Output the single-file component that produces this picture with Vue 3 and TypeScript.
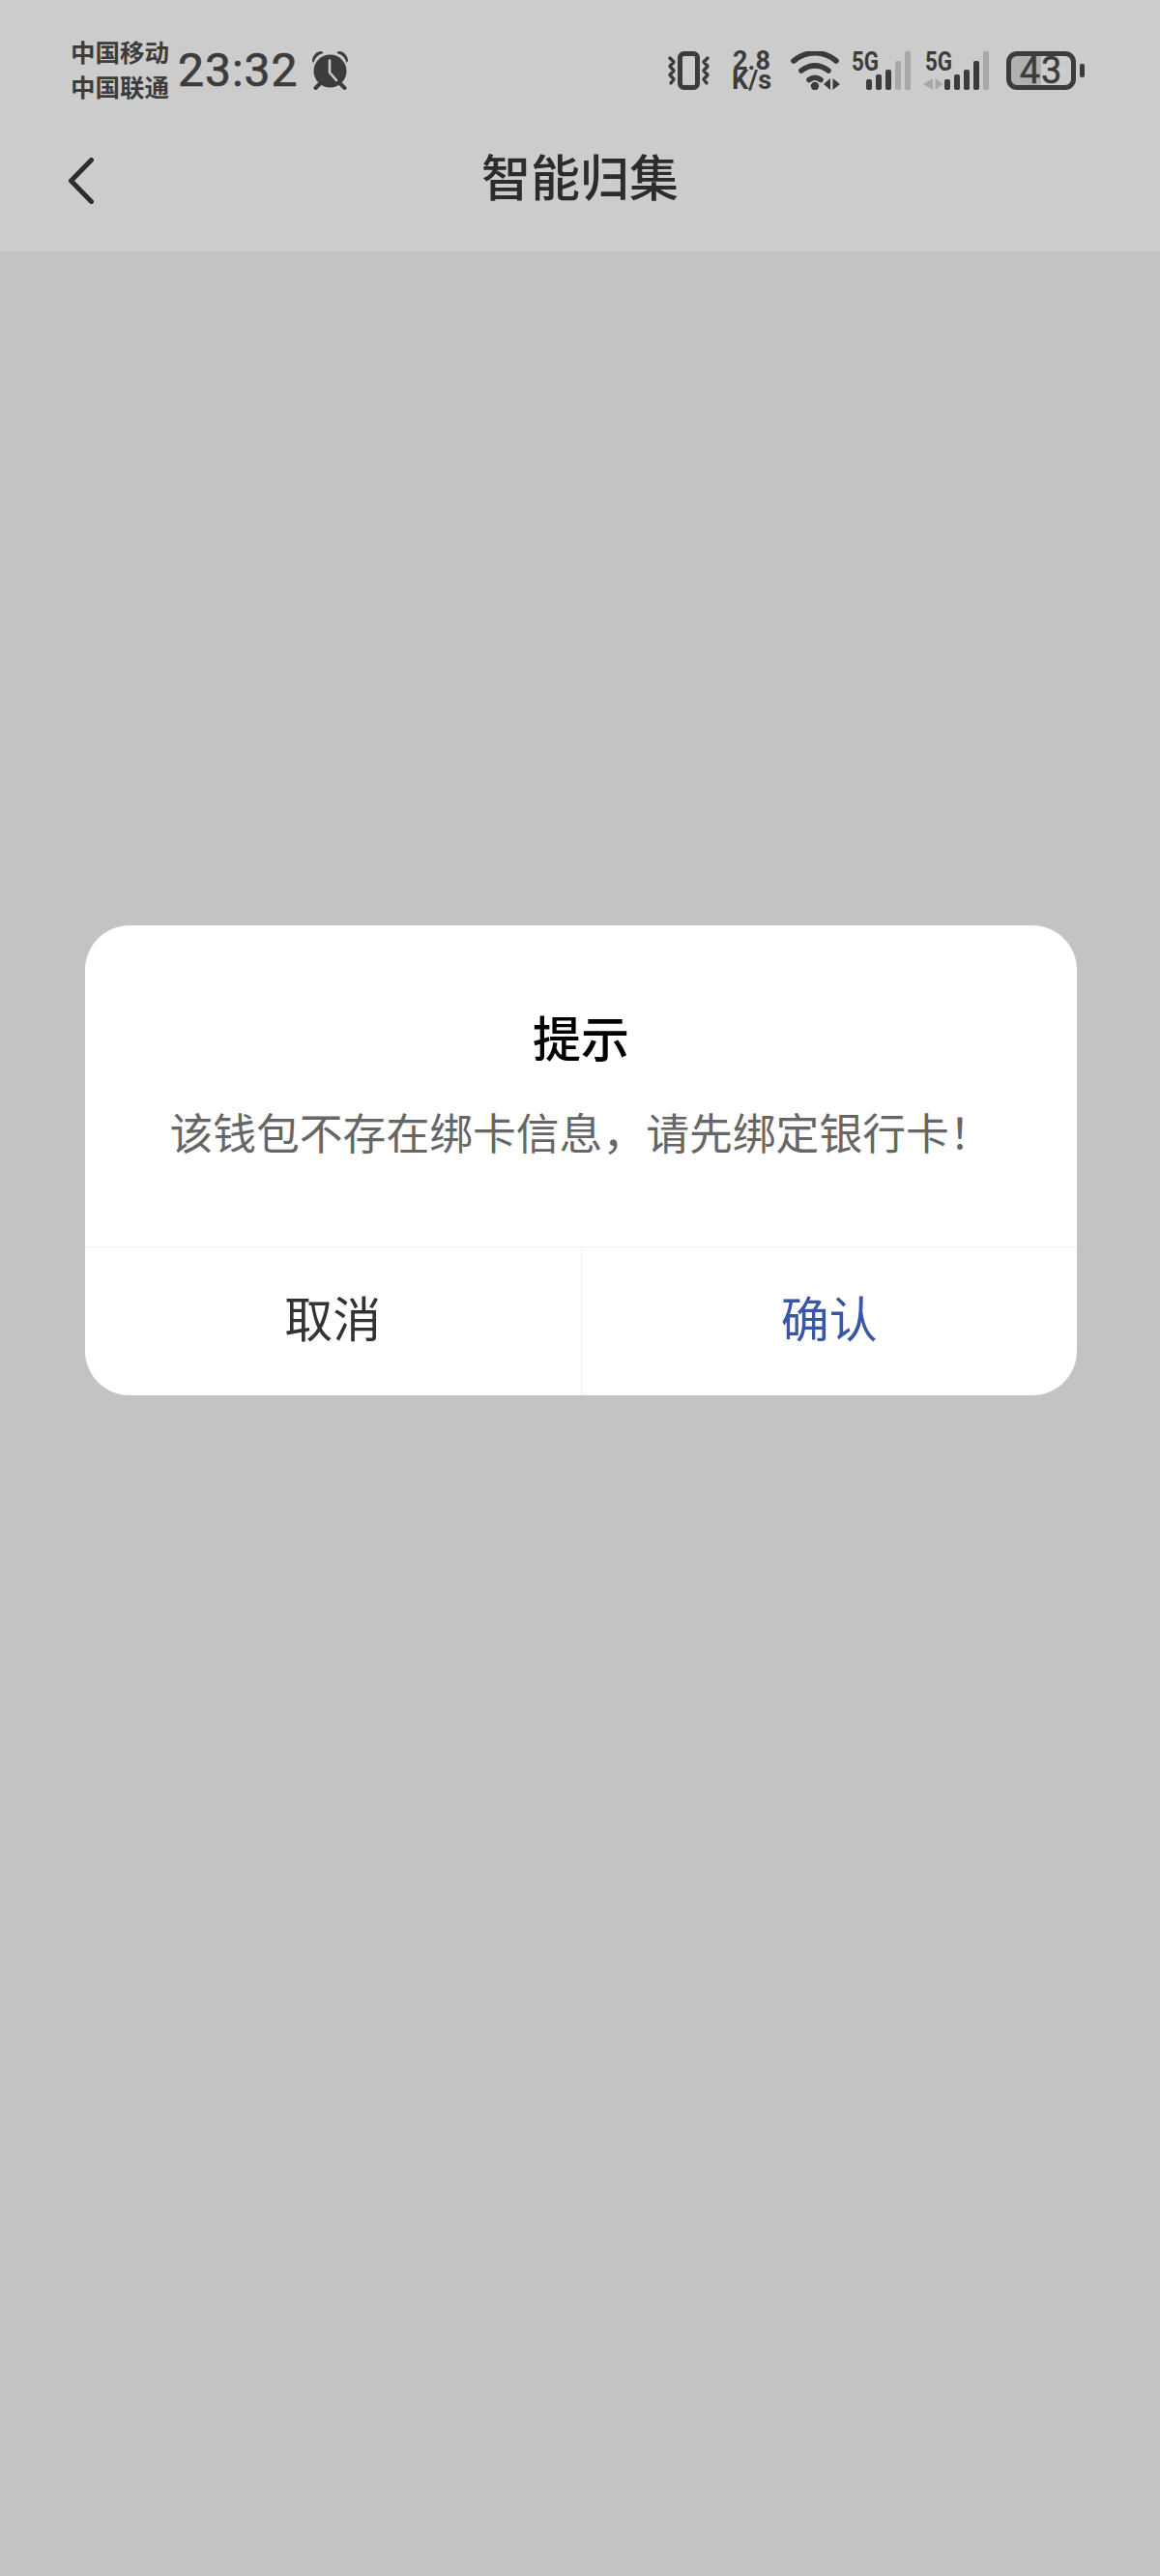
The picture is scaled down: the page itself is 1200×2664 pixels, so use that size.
<script setup lang="ts">
const carriers = ['中国移动', '中国联通']
</script>

<template>
  <div class="page">
    <div class="topbar">
      <div class="statusbar">
        <div class="carriers">
          <div v-for="c in carriers" :key="c">{{ c }}</div>
        </div>
        <div class="time">23:32</div>
        <svg class="alarm" width="40" height="40" viewBox="0 0 40 40">
          <circle cx="19.500" cy="20.500" r="17" fill="#3c3c3c" />
          <path d="M19 9.500V22l7 8" fill="none" stroke="#ccc" stroke-width="2.600" stroke-linecap="round" stroke-linejoin="round" />
          <path d="M1 10C1 5 5 0 11 0l1.500 2C8 3 4 6 2.500 12zM38 10C38 5 34 0 28 0l-1.500 2c4.500 1 8.500 4 10 10z" fill="#3c3c3c" />
          <path d="M4.500 38l5-5M34.500 38l-5-5" stroke="#3c3c3c" stroke-width="4" stroke-linecap="round" />
        </svg>

        <div class="spacer"></div>

        <svg class="vibrate" width="45" height="40" viewBox="0 0 45 40">
          <rect x="13.500" y="2.500" width="18" height="35" rx="4" fill="none" stroke="#3c3c3c" stroke-width="5" />
          <path d="M3 7l4 4-4 4.500 4 4.500-4 4.500 4 4.500-3 4M42 7l-4 4 4 4.500-4 4.500 4 4.500-4 4.500 3 4" fill="none" stroke="#3c3c3c" stroke-width="3.400" stroke-linecap="round" stroke-linejoin="round" />
        </svg>

        <div class="speed">
          <div>2.8</div>
          <div>K/s</div>
        </div>

        <svg class="wifi" width="52" height="40" viewBox="0 0 52 40">
          <path d="M4 10C17-1 35-1 48 10M12 20c9-6.500 19-6.500 28 0M20 29.500c4-3 8-3 12 0" fill="none" stroke="#3c3c3c" stroke-width="5.600" stroke-linecap="round" />
          <circle cx="26" cy="36" r="4.200" fill="#3c3c3c" />
          <path d="M42 28v12l-7-6zM44.500 28v12l7.500-6z" fill="#3c3c3c" />
        </svg>

        <svg class="signal" width="62" height="40" viewBox="0 0 62 40">
          <text x="0" y="19.500" class="net" textLength="28" lengthAdjust="spacingAndGlyphs">5G</text>
          <rect x="15" y="29" width="6" height="11" rx="2" fill="#3c3c3c" />
          <rect x="25" y="24" width="6" height="16" rx="2" fill="#3c3c3c" />
          <rect x="35" y="19" width="6" height="21" rx="2" fill="#3c3c3c" />
          <rect x="45" y="10" width="6" height="30" rx="2" fill="#a8a8a8" />
          <rect x="55" y="0" width="6" height="40" rx="2" fill="#a8a8a8" />
        </svg>

        <svg class="signal second" width="68" height="40" viewBox="0 0 68 40">
          <text x="2" y="19.500" class="net" textLength="28" lengthAdjust="spacingAndGlyphs">5G</text>
          <path d="M10 28v12l-10-6zM12.500 28v12l8-6z" fill="#a8a8a8" />
          <rect x="22" y="29" width="6" height="11" rx="2" fill="#3c3c3c" />
          <rect x="32" y="24" width="6" height="16" rx="2" fill="#3c3c3c" />
          <rect x="42" y="19" width="6" height="21" rx="2" fill="#3c3c3c" />
          <rect x="52" y="10" width="6" height="30" rx="2" fill="#3c3c3c" />
          <rect x="62" y="0" width="6" height="40" rx="2" fill="#a8a8a8" />
        </svg>

        <div class="battery">
          <div class="battery-body">43</div>
          <div class="battery-nub"></div>
        </div>
      </div>

      <div class="navbar">
        <svg class="back" width="26" height="48" viewBox="0 0 26 48">
          <path d="M23.500 2.500L2.500 24l21 21.500" fill="none" stroke="#2c2c2c" stroke-width="5" stroke-linecap="round" stroke-linejoin="round" />
        </svg>
        <div class="title">智能归集</div>
      </div>
    </div>

    <div class="content">
      <div class="dialog">
        <div class="dialog-body">
          <div class="dialog-title">提示</div>
          <div class="dialog-text">该钱包不存在绑卡信息，请先绑定银行卡！</div>
        </div>
        <div class="dialog-actions">
          <div class="action cancel">取消</div>
          <div class="action confirm">确认</div>
        </div>
      </div>
    </div>
  </div>
</template>

<style>
html,
body {
  margin: 0;
  background: #c3c3c3;
}
</style>

<style scoped>
.page {
  width: 1200px;
  height: 2664px;
  background: #c3c3c3;
  font-family: Roboto, "Noto Sans CJK SC", sans-serif;
  overflow: hidden;
}

.topbar {
  height: 260px;
  background: #cccccc;
}

.statusbar {
  height: 110px;
  padding: 36px 78px 0 73px;
  display: flex;
  align-items: center;
  color: #3c3c3c;
  box-sizing: border-box;
}

.carriers {
  width: 102px;
  font-size: 25.500px;
  line-height: 36px;
  font-weight: 700;
  white-space: nowrap;
}

.time {
  margin-left: 9px;
  font-size: 48px;
  line-height: 56px;
  letter-spacing: 1px;
  -webkit-text-stroke: 0.7px #3c3c3c;
  white-space: nowrap;
}

.alarm {
  margin-left: 13px;
}

.spacer {
  flex: 1;
}

.speed {
  margin-left: 20px;
  width: 45px;
  font-size: 27px;
  line-height: 20px;
  font-weight: 700;
  text-align: center;
}

.wifi {
  margin-left: 17px;
}

.signal {
  margin-left: 12px;
  overflow: visible;
}

.net {
  font-family: Roboto, sans-serif;
  font-size: 28px;
  font-weight: 700;
  fill: #3c3c3c;
}

.battery {
  margin-left: 18px;
  display: flex;
  align-items: center;
  gap: 4px;
}

.battery-body {
  width: 72px;
  height: 40px;
  box-sizing: border-box;
  border: 5px solid #3c3c3c;
  border-radius: 11px;
  background: linear-gradient(90deg, #b0b0b0 50%, transparent 50%);
  font-size: 38px;
  line-height: 30px;
  letter-spacing: 1px;
  -webkit-text-stroke: 0.5px #3c3c3c;
  text-align: center;
  color: #3c3c3c;
}

.battery-nub {
  width: 5px;
  height: 14px;
  border-radius: 2px;
  background: #3c3c3c;
}

.navbar {
  height: 150px;
  padding-left: 71px;
  display: flex;
  align-items: center;
}

.back {
  flex: none;
  margin-top: 4px;
}

.title {
  margin-left: 401px;
  margin-top: 2px;
  width: 204px;
  font-size: 51px;
  line-height: 60px;
  font-weight: 500;
  color: #2c2c2c;
  white-space: nowrap;
}

.content {
  padding: 697px 86px 0 88px;
}

.dialog {
  background: #ffffff;
  border-radius: 46px;
  overflow: hidden;
}

.dialog-body {
  height: 333px;
  box-sizing: border-box;
  padding-top: 89px;
  text-align: center;
  border-bottom: 1px solid #eeeeee;
}

.dialog-title {
  font-size: 50px;
  line-height: 60px;
  font-weight: 500;
  color: #000000;
}

.dialog-text {
  margin-top: 38px;
  font-size: 44.800px;
  line-height: 60px;
  color: #666666;
  white-space: nowrap;
}

.dialog-actions {
  display: flex;
  height: 153px;
}

.action {
  flex: 1;
  font-size: 50px;
  line-height: 153px;
  text-align: center;
}

.cancel {
  color: #333333;
  border-right: 1px solid #eeeeee;
}

.confirm {
  color: #3a57a6;
}
</style>
